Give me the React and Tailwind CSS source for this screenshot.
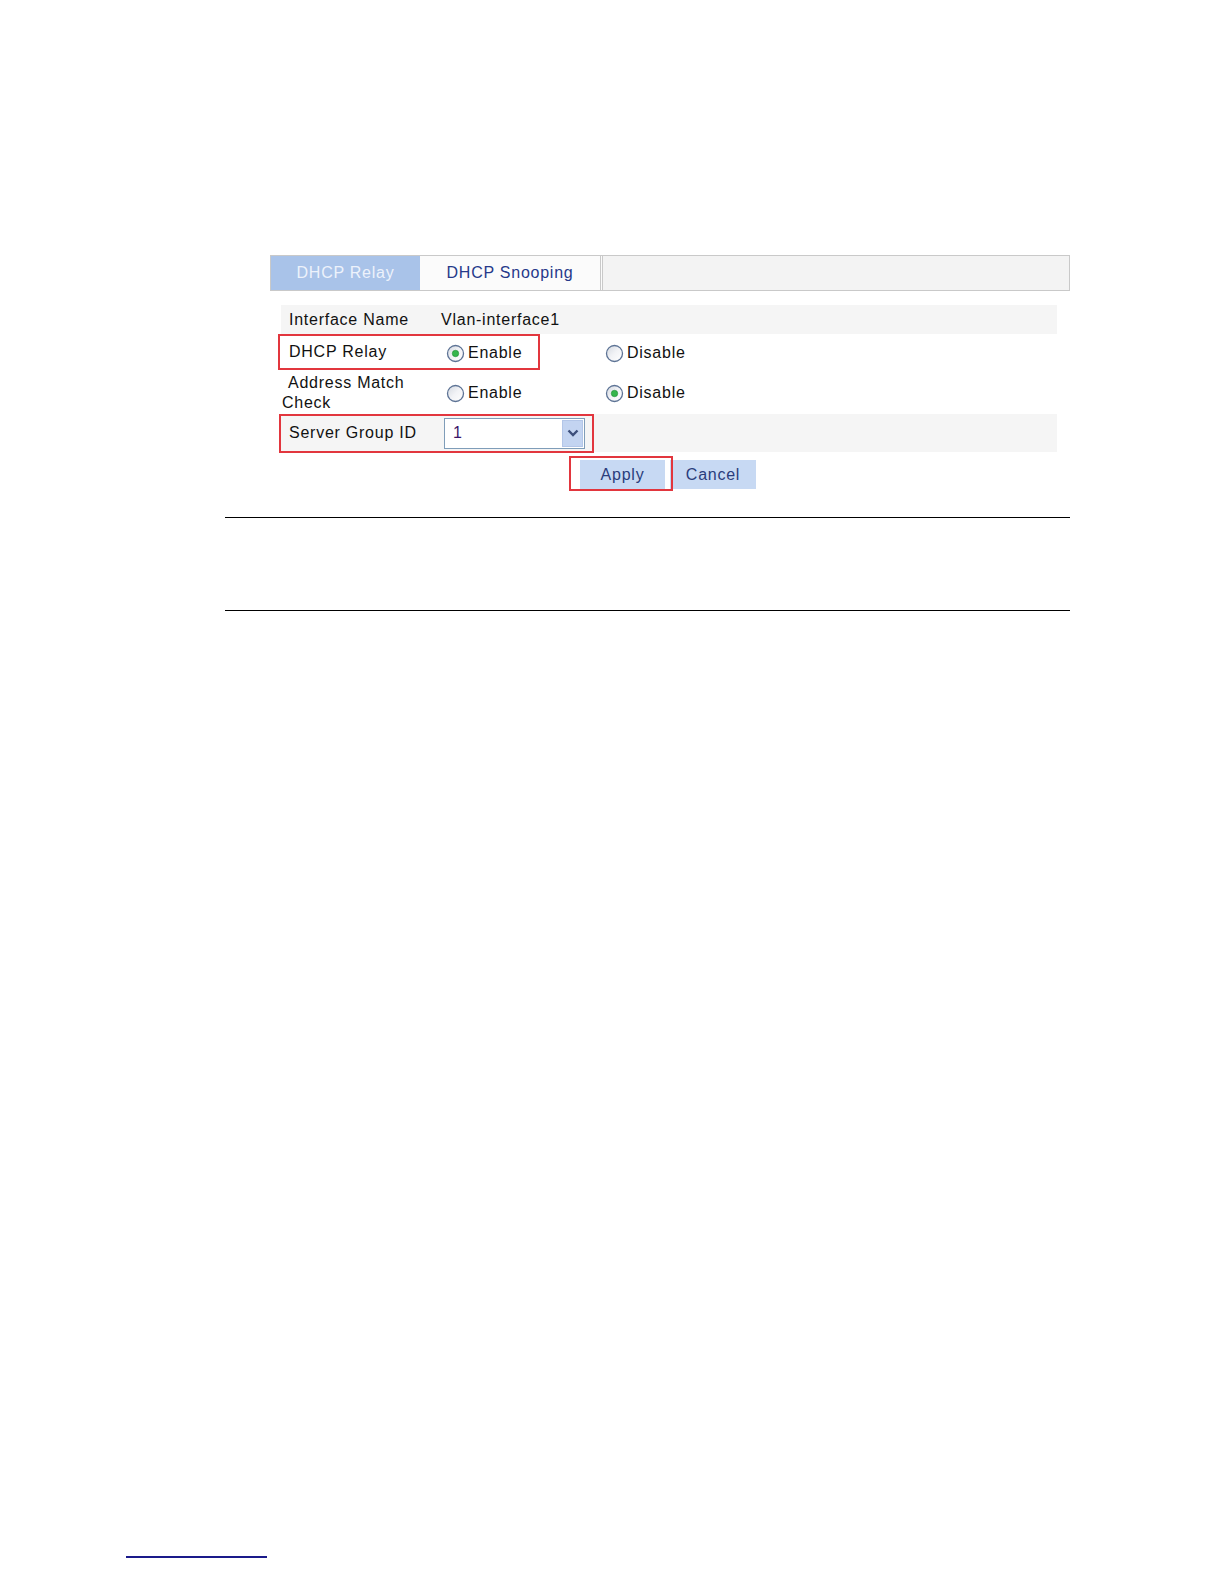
import React from "react";

function Radio({ checked }) {
  const id = checked ? "rg1" : "rg0";
  return (
    <svg width="19" height="19" viewBox="0 0 19 19" className="shrink-0">
      <defs>
        <linearGradient id={id} x1="0" y1="0" x2="1" y2="1">
          <stop offset="0" stopColor="#d3d8e0" />
          <stop offset="0.5" stopColor="#f2f3f6" />
          <stop offset="1" stopColor="#ffffff" />
        </linearGradient>
      </defs>
      <circle cx="9.5" cy="9.5" r="8" fill={`url(#${id})`} stroke="#5d7395" strokeWidth="1.3" />
      {checked && <circle cx="9.5" cy="9.5" r="3.2" fill="#35b64c" stroke="#1d8c33" strokeWidth="0.6" />}
    </svg>
  );
}

export default function App() {
  return (
    <div className="w-[1224px] h-[1584px] bg-white text-[16px] tracking-[0.75px] text-[#111] font-['Liberation_Sans',Arial,sans-serif] overflow-hidden">
      <div className="pt-[255px]">
        <div className="ml-[270px] w-[800px]">
          {/* Tabs */}
          <div className="flex h-[36px] border border-[#c9c9c9] bg-[#f3f3f3]">
            <div className="w-[149px] flex items-center justify-center bg-[#a9c3e9] text-[#edf2fb]">DHCP Relay</div>
            <div className="w-[183px] flex items-center justify-center bg-[#fbfbfb] text-[#26398a] border-r-[3px] border-double border-[#c9c9c9]">DHCP Snooping</div>
            <div className="flex-1" />
          </div>

          {/* Table */}
          <div className="relative ml-[11px] mt-[14px] w-[776px]">
            <div className="flex h-[29px] items-center bg-[#f5f5f5]">
              <div className="w-[160px] pl-[8px]">Interface Name</div>
              <div>Vlan-interface1</div>
            </div>
            <div className="flex h-[38px] items-center">
              <div className="w-[160px] pl-[8px] -mt-[3px]">DHCP Relay</div>
              <div className="w-[159px] flex items-center gap-[3px] pl-[5px]"><Radio checked /><span>Enable</span></div>
              <div className="flex items-center gap-[3px] pl-[5px]"><Radio /><span>Disable</span></div>
            </div>
            <div className="flex h-[42px] items-center">
              <div className="w-[160px] pl-[1px] leading-[20px]">
                <div className="pl-[6px]">Address Match</div>
                <div>Check</div>
              </div>
              <div className="w-[159px] flex items-center gap-[3px] pl-[5px]"><Radio /><span>Enable</span></div>
              <div className="flex items-center gap-[3px] pl-[5px]"><Radio checked /><span>Disable</span></div>
            </div>
            <div className="flex h-[38px] items-center bg-[#f5f5f5]">
              <div className="w-[160px] pl-[8px]">Server Group ID</div>
              <div className="ml-[3px] w-[141px] h-[31px] flex items-center bg-white border border-[#7f9db9]">
                <span className="flex-1 pl-[8px] text-[#3b1569]">1</span>
                <div className="w-[21px] h-[27px] mr-[1px] flex items-center justify-center bg-[#c3d4f1] border border-[#b3c6e8]">
                  <svg width="12" height="8" viewBox="0 0 12 8">
                    <path d="M1.5 1.5 L6 6 L10.5 1.5" fill="none" stroke="#3c4f7c" strokeWidth="2.4" />
                  </svg>
                </div>
              </div>
            </div>
            <div className="flex mt-[8px] gap-[5px] pl-[299px]">
              <div className="w-[85px] h-[29px] flex items-center justify-center bg-[#c7d9f3] text-[#2a3d7c]">Apply</div>
              <div className="w-[86px] h-[29px] flex items-center justify-center bg-[#c7d9f3] text-[#2a3d7c]">Cancel</div>
            </div>

            {/* red annotation boxes */}
            <div className="absolute left-[-3px] top-[29px] w-[262px] h-[36px] border-2 border-[#e2363e]" />
            <div className="absolute left-[-2px] top-[109px] w-[315px] h-[39px] border-2 border-[#e2363e]" />
            <div className="absolute left-[288px] top-[151px] w-[104px] h-[35px] border-2 border-[#e2363e]" />
          </div>
        </div>

        <div className="ml-[225px] w-[845px] mt-[28px] border-t-[1.5px] border-black" />
        <div className="ml-[225px] w-[845px] mt-[92px] border-t-[1.5px] border-black" />
        <div className="ml-[126px] w-[141px] mt-[945px] border-t-2 border-[#1a1a8a]" />
      </div>
    </div>
  );
}
